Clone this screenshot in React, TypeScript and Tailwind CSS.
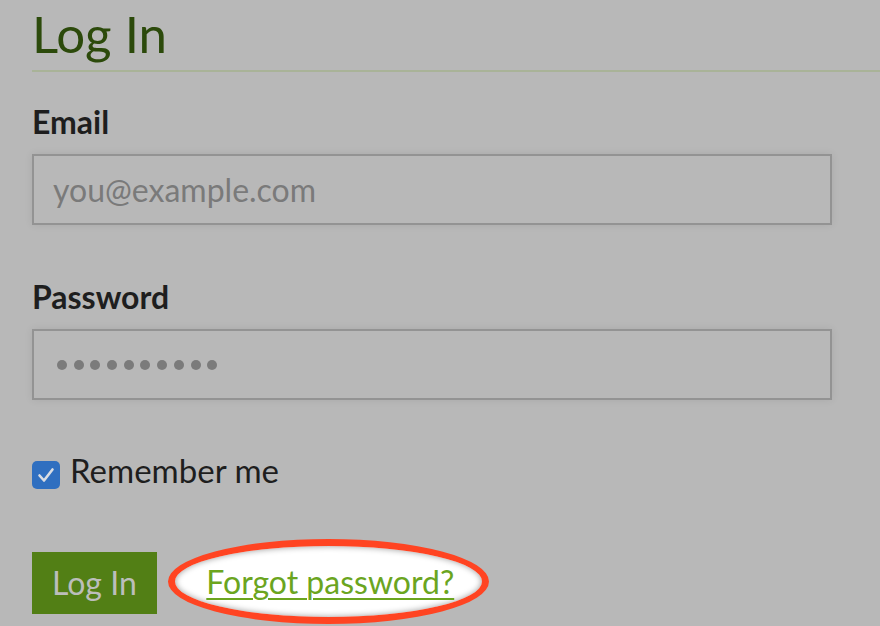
import { useState } from "react";

function CheckMark() {
  return (
    <svg viewBox="0 0 28 28" className="w-[28px] h-[28px]">
      <path d="M7.5 14.5 L12 19.5 L20.5 8.5" fill="none" stroke="#d9dde3" strokeWidth="2.6" strokeLinecap="round" strokeLinejoin="round" />
    </svg>
  );
}

export default function App() {
  const [remember, setRemember] = useState(true);

  return (
    <div className="min-h-screen bg-[#b8b8b8] pl-8 font-['Lato','Open_Sans',sans-serif] overflow-hidden">
      {/* heading */}
      <div className="pt-[8px] pb-[11px] border-b-2 border-[#a9b398]">
        <h1 className="text-[51px] leading-[51px] text-[#2c4a0b]">Log In</h1>
      </div>

      {/* email */}
      <label className="block mt-[34px] text-[32px] leading-[31px] font-bold text-[#1e1e1e]">Email</label>
      <div className="mt-[17px] w-[800px] h-[71px] border-2 border-[#939393] shadow-[0_0_8px_rgba(0,0,0,0.08)] flex items-center pl-[19px]">
        <span className="text-[32px] text-[#7a7a7a]">you@example.com</span>
      </div>

      {/* password */}
      <label className="block mt-[56px] text-[32px] leading-[31px] font-bold text-[#1e1e1e]">Password</label>
      <div className="mt-[17px] w-[800px] h-[71px] border-2 border-[#939393] shadow-[0_0_8px_rgba(0,0,0,0.08)] flex items-center pl-[23px] gap-[6.7px]">
        {Array.from({ length: 10 }).map((_, i) => (
          <span key={i} className="w-[10px] h-[10px] rounded-full bg-[#7b7b7b]" />
        ))}
      </div>

      {/* remember */}
      <div className="mt-[54px] flex items-start gap-[10px]">
        <button
          onClick={() => setRemember(!remember)}
          className="mt-[7px] w-[28px] h-[28px] rounded-[5px] bg-[#2f6fc0] flex items-center justify-center"
        >
          {remember && <CheckMark />}
        </button>
        <span className="text-[33px] leading-[33px] text-[#1e1e1e]">Remember me</span>
      </div>

      {/* actions */}
      <div className="mt-[50px] flex items-start gap-[11px]">
        <button className="mt-[13px] h-[62px] px-[20px] bg-[#527f15] text-[32px] text-[#bcbebb]">Log In</button>
        <div className="w-[321px] h-[85px] rounded-[50%] border-[7px] border-[#ff4422] bg-white shadow-[inset_0_0_6px_rgba(0,0,0,0.4)] flex items-center justify-center pl-[4px]">
          <a href="#" className="text-[32px] leading-[32px] text-[#6ba51f] underline underline-offset-[4px] decoration-2">
            Forgot password?
          </a>
        </div>
      </div>
    </div>
  );
}
